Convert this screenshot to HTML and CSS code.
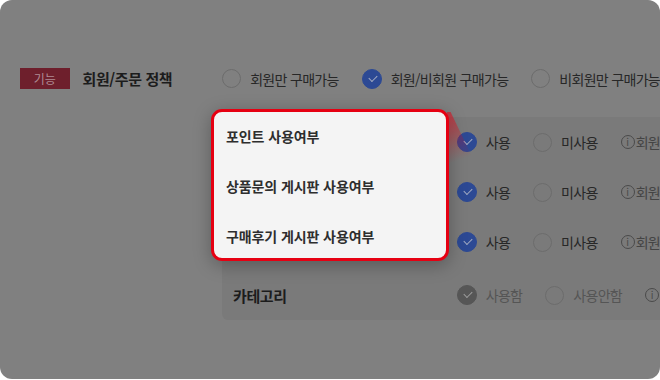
FILE: index.html
```html
<!DOCTYPE html>
<html lang="ko">
<head>
<meta charset="utf-8">
<link rel="stylesheet" href="styles.css">
</head>
<body>
<div class="frame">
  <div class="policy">
    <span class="badge">기능</span>
    <span class="title">회원/주문 정책</span>
    <div class="options">
      <span class="opt"><i class="radio"></i>회원만 구매가능</span>
      <span class="opt"><i class="radio on"></i>회원/비회원 구매가능</span>
      <span class="opt"><i class="radio"></i>비회원만 구매가능</span>
    </div>
  </div>
  <div class="panel">
    <div class="row">
      <span class="label"></span>
      <span class="opt"><i class="radio on"></i>사용</span>
      <span class="opt"><i class="radio"></i>미사용</span>
      <span class="info"><i class="ic">i</i>회원</span>
    </div>
    <div class="row">
      <span class="label"></span>
      <span class="opt"><i class="radio on"></i>사용</span>
      <span class="opt"><i class="radio"></i>미사용</span>
      <span class="info"><i class="ic">i</i>회원</span>
    </div>
    <div class="row">
      <span class="label"></span>
      <span class="opt"><i class="radio on"></i>사용</span>
      <span class="opt"><i class="radio"></i>미사용</span>
      <span class="info"><i class="ic">i</i>회원</span>
    </div>
    <div class="row last">
      <span class="label">카테고리</span>
      <span class="opt dim"><i class="radio gray"></i>사용함</span>
      <span class="opt dim"><i class="radio"></i>사용안함</span>
      <span class="info"><i class="ic">i</i></span>
    </div>
  </div>

  <div class="popup">
    <div class="item">포인트 사용여부</div>
    <div class="item">상품문의 게시판 사용여부</div>
    <div class="item">구매후기 게시판 사용여부</div>
  </div>
</div>
</body>
</html>
```
FILE: styles.css
```css
* { box-sizing: border-box; }
html, body { margin: 0; background: #ffffff; }
body {
  font-family: "Noto Sans CJK KR", "Noto Sans", sans-serif;
  width: 660px;
  height: 380px;
  overflow: hidden;
}
.frame {
  position: relative;
  width: 660px;
  height: 379px;
  background: #808080;
  border-radius: 12px;
  overflow: hidden;
  padding: 68px 0 0 20px;
  color: #272727;
}
.policy {
  display: flex;
  align-items: center;
  height: 21px;
  white-space: nowrap;
}
.badge {
  width: 50px;
  height: 21px;
  background: #6e1f2c;
  color: #b08c94;
  font-size: 12px;
  display: flex;
  align-items: center;
  justify-content: center;
  margin-right: 13px;
}
.title {
  width: 141px;
  font-size: 15px;
  font-weight: 700;
  letter-spacing: -0.4px;
  color: #1c1c1c;
}
.options { display: flex; align-items: center; gap: 23px; }
.opt {
  display: flex;
  align-items: center;
  font-size: 14px;
  letter-spacing: -0.7px;
  color: #272727;
  white-space: nowrap;
}
.radio {
  width: 19px;
  height: 19px;
  border-radius: 50%;
  border: 1px solid #6c6c6c;
  margin-right: 9px;
  flex: none;
  position: relative;
}
.radio.on { background: #2c4994; border-color: #2c4994; width: 20px; height: 20px; }
.radio.gray { background: #565656; border-color: #565656; width: 20px; height: 20px; }
.radio.on::after, .radio.gray::after {
  content: "";
  position: absolute;
  left: 6px;
  top: 5px;
  width: 7px;
  height: 4px;
  border-left: 1.5px solid #a3abc2;
  border-bottom: 1.5px solid #a3abc2;
  transform: rotate(-45deg);
}
.radio.gray::after { border-color: #9c9c9c; }

.panel {
  margin: 28px 0 0 202px;
  background: #7a7a7a;
  border-radius: 0 0 0 6px;
  padding-left: 11px;
}
.row {
  display: flex;
  align-items: center;
  height: 50px;
  gap: 23px;
  white-space: nowrap;
}
.row.last { height: 50px; margin-top: 3px; }
.row .label {
  width: 201px;
  font-size: 15px;
  font-weight: 700;
  letter-spacing: -0.4px;
  color: #1c1c1c;
}
.opt.dim { color: #555555; }
.info {
  display: flex;
  align-items: center;
  font-size: 14px;
  letter-spacing: -0.7px;
  color: #444;
}
.ic {
  width: 14px;
  height: 14px;
  border: 1px solid #4a4a4a;
  border-radius: 50%;
  font-style: normal;
  font-size: 10px;
  line-height: 12px;
  text-align: center;
  letter-spacing: 0;
  margin-right: 1px;
  color: #4a4a4a;
}

.popup {
  position: absolute;
  left: 211px;
  top: 109px;
  width: 238px;
  height: 152px;
  background: #f4f4f4;
  border: 3px solid #e60012;
  border-radius: 11px;
  padding: 0 0 0 12px;
  box-shadow: 0 4px 18px rgba(0, 0, 0, 0.28);
}
.popup::after {
  content: "";
  position: absolute;
  left: 233px;
  top: 0;
  width: 30px;
  height: 55px;
  background: linear-gradient(160deg, rgba(230, 0, 18, 0.55), rgba(230, 0, 18, 0) 80%);
  clip-path: polygon(0 0, 12% 0, 100% 100%, 0 100%);
}
.item {
  height: 50px;
  display: flex;
  align-items: center;
  font-size: 14px;
  font-weight: 700;
  letter-spacing: -0.1px;
  color: #2e2e2e;
}
.item:first-child { margin-top: -1px; }
```
